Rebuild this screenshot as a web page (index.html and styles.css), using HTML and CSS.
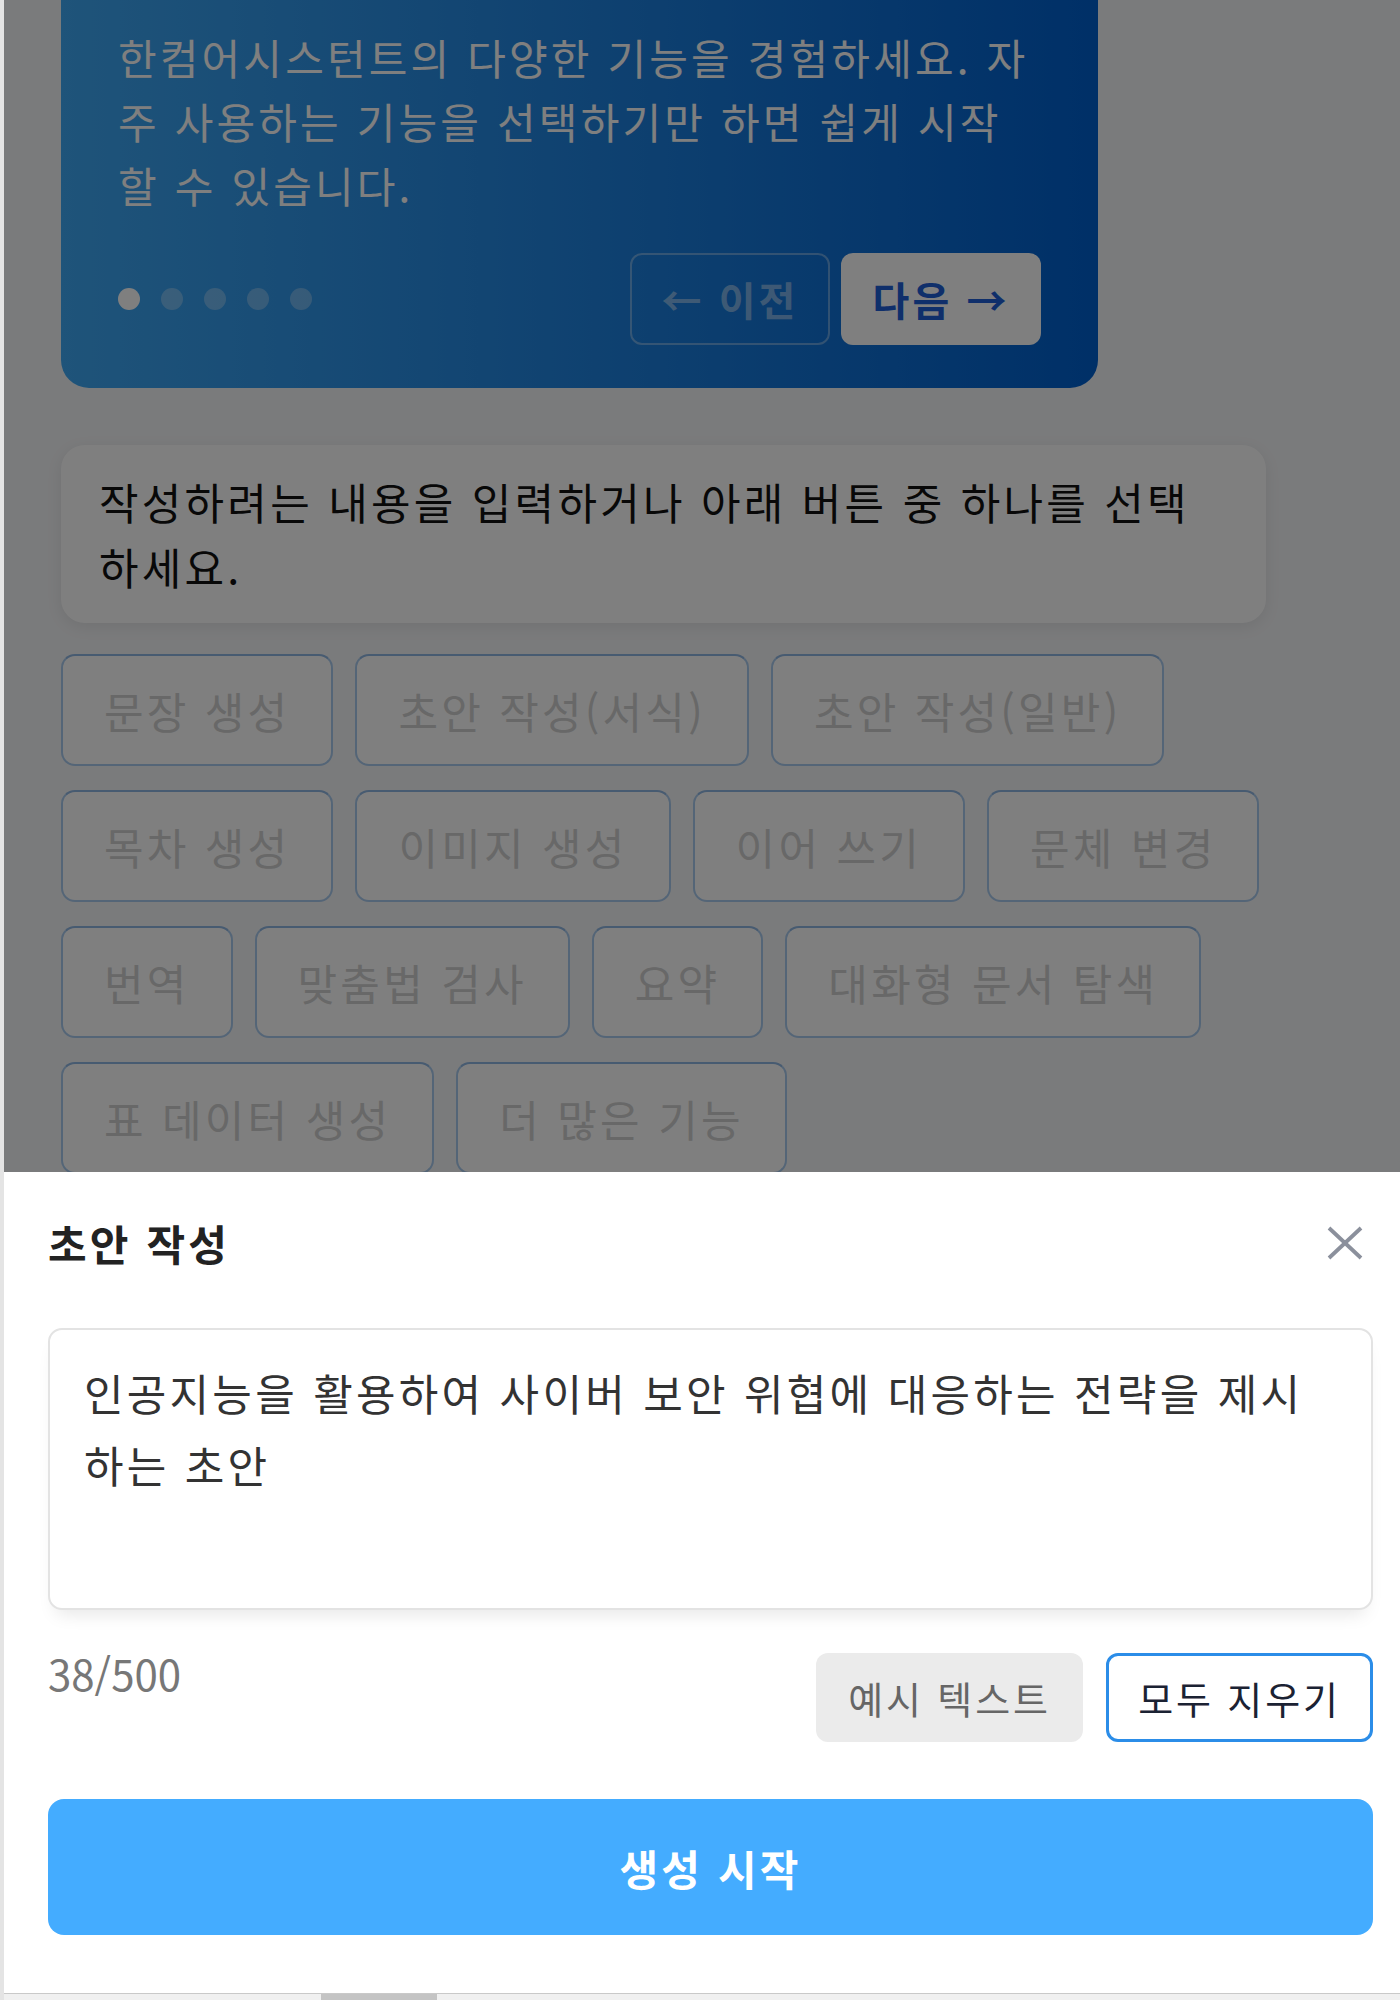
FILE: index.html
```html
<!DOCTYPE html>
<html lang="ko">
<head>
  <meta charset="UTF-8">
  <meta name="viewport" content="width=device-width, initial-scale=1.0">
  <title>한컴어시스턴트 - 초안 작성</title>
  <link rel="stylesheet" href="styles.css">
</head>
<body>
  <div class="app">
    <main class="page">
      <section class="intro-card">
        <p class="intro-text">한컴어시스턴트의 다양한 기능을 경험하세요. 자주 사용하는 기능을 선택하기만 하면 쉽게 시작할 수 있습니다.</p>
        <div class="intro-controls">
          <div class="dots">
            <span class="dot active"></span>
            <span class="dot"></span>
            <span class="dot"></span>
            <span class="dot"></span>
            <span class="dot"></span>
          </div>
          <div class="intro-nav">
            <button class="nav-btn prev">← 이전</button>
            <button class="nav-btn next">다음 →</button>
          </div>
        </div>
      </section>

      <div class="prompt-box">작성하려는 내용을 입력하거나 아래 버튼 중 하나를 선택하세요.</div>

      <div class="chips">
        <button class="chip">문장 생성</button>
        <button class="chip">초안 작성(서식)</button>
        <button class="chip">초안 작성(일반)</button>
        <button class="chip">목차 생성</button>
        <button class="chip">이미지 생성</button>
        <button class="chip">이어 쓰기</button>
        <button class="chip">문체 변경</button>
        <button class="chip">번역</button>
        <button class="chip">맞춤법 검사</button>
        <button class="chip">요약</button>
        <button class="chip">대화형 문서 탐색</button>
        <button class="chip">표 데이터 생성</button>
        <button class="chip">더 많은 기능</button>
      </div>
    </main>

    <div class="backdrop"></div>

    <!-- bottom sheet -->
    <section class="sheet">
      <header class="sheet-header">
        <h2>초안 작성</h2>
        <button class="close-btn" aria-label="닫기">
          <svg width="36" height="34" viewBox="0 0 36 34">
            <path d="M2 2 L34 32 M34 2 L2 32" stroke="#8b909c" stroke-width="3.8" fill="none"/>
          </svg>
        </button>
      </header>

      <textarea class="draft-input">인공지능을 활용하여 사이버 보안 위협에 대응하는 전략을 제시하는 초안</textarea>

      <div class="draft-footer">
        <span class="counter">38/500</span>
        <div class="draft-actions">
          <button class="btn-sample">예시 텍스트</button>
          <button class="btn-clear">모두 지우기</button>
        </div>
      </div>

      <button class="btn-generate">생성 시작</button>
    </section>

    <div class="hscroll"><div class="hscroll-thumb"></div></div>
  </div>
</body>
</html>
```

FILE: styles.css
```css
:root {
  --color-page: #f5f6f8;
  --color-primary: #44acff;
  --color-border: #e3e3e3;
  --font-main: "Noto Sans CJK KR", "Noto Sans", sans-serif;
  --tracking: 0.075em;
}

* {
  box-sizing: border-box;
}

html,
body {
  margin: 0;
}

body {
  background-color: #e4e4e4;
  font-family: var(--font-main);
}

button,
textarea {
  font-family: inherit;
}

.app {
  position: relative;
  margin-left: 4px;
  height: 2000px;
  overflow: hidden;
  background-color: var(--color-page);
}

.page {
  width: 1205px;
  margin-left: 57px;
}

/* intro carousel card */
.intro-card {
  width: 1037px;
  margin-top: -40px;
  padding: 65px 57px 43px;
  border-radius: 28px;
  background: linear-gradient(90deg, #3ea8f4, #0060cf);
  color: #fff;
}

.intro-text {
  margin: 0;
  font-size: 42px;
  line-height: 64px;
  letter-spacing: var(--tracking);
}

.intro-controls {
  display: flex;
  justify-content: space-between;
  align-items: center;
  margin-top: 36px;
}

.dots {
  display: flex;
  gap: 21px;
}

.dot {
  width: 22px;
  height: 22px;
  border-radius: 50%;
  background-color: rgba(255, 255, 255, 0.3);
}

.dot.active {
  background-color: #fff;
}

.intro-nav {
  display: flex;
  gap: 11px;
}

.nav-btn {
  width: 200px;
  height: 92px;
  border-radius: 12px;
  font-size: 40px;
  font-weight: 700;
  letter-spacing: var(--tracking);
  cursor: pointer;
}

.nav-btn.prev {
  background: transparent;
  border: 2px solid rgba(255, 255, 255, 0.35);
  color: rgba(255, 255, 255, 0.45);
}

.nav-btn.next {
  background-color: #fff;
  border: none;
  color: #1f5fd6;
}

/* prompt */
.prompt-box {
  margin-top: 57px;
  padding: 24px 64px 24px 38px;
  background-color: #fff;
  border-radius: 24px;
  box-shadow: 0 4px 16px rgba(0, 0, 0, 0.08);
  font-size: 43px;
  line-height: 65px;
  letter-spacing: var(--tracking);
  color: #111;
}

.chips {
  display: flex;
  flex-wrap: wrap;
  gap: 24px 22px;
  width: 1240px;
  margin-top: 31px;
}

.chip {
  height: 112px;
  padding: 0 41px;
  border: 2px solid #a9cbee;
  border-top-color: #8fb6e2;
  border-radius: 14px;
  background-color: #fff;
  color: #d0d0d0;
  font-size: 43px;
  letter-spacing: var(--tracking);
}

.backdrop {
  position: absolute;
  inset: 0;
  background-color: rgba(0, 0, 0, 0.5);
}

/* bottom sheet */
.sheet {
  position: absolute;
  left: 0;
  right: 0;
  bottom: 7px;
  padding: 39px 27px 58px 44px;
  background-color: #fff;
}

.sheet-header {
  display: flex;
  justify-content: space-between;
  align-items: center;
  height: 64px;
}

.sheet-header h2 {
  margin: 0;
  font-size: 42px;
  font-weight: 700;
  line-height: 64px;
  letter-spacing: var(--tracking);
  color: #222;
}

.close-btn {
  width: 36px;
  height: 34px;
  margin-right: 10px;
  padding: 0;
  border: none;
  background: none;
  cursor: pointer;
}

.close-btn svg {
  display: block;
}

.draft-input {
  display: block;
  width: 100%;
  height: 282px;
  margin-top: 53px;
  padding: 26px 50px 0 34px;
  border: 2px solid var(--color-border);
  border-radius: 14px;
  box-shadow: 0 12px 18px -8px rgba(0, 0, 0, 0.1);
  font-size: 43px;
  line-height: 72px;
  letter-spacing: var(--tracking);
  color: #333;
  resize: none;
  outline: none;
}

.draft-footer {
  display: flex;
  justify-content: space-between;
  align-items: flex-start;
  margin-top: 43px;
}

.counter {
  margin-top: -3px;
  font-size: 42px;
  line-height: 46px;
  color: #777;
}

.draft-actions {
  display: flex;
  gap: 23px;
}

.btn-sample,
.btn-clear {
  width: 267px;
  height: 89px;
  border-radius: 12px;
  font-size: 38px;
  letter-spacing: var(--tracking);
  cursor: pointer;
}

.btn-sample {
  background-color: #ebebeb;
  border: none;
  color: #666;
}

.btn-clear {
  background-color: #fff;
  border: 3px solid #2b8de8;
  color: #1b2233;
}

.btn-generate {
  display: block;
  width: 100%;
  height: 136px;
  margin-top: 57px;
  border: none;
  border-radius: 16px;
  background-color: var(--color-primary);
  color: #fff;
  font-size: 42px;
  font-weight: 700;
  letter-spacing: var(--tracking);
  cursor: pointer;
}

.hscroll {
  position: absolute;
  left: 0;
  right: 0;
  bottom: 0;
  height: 7px;
  border-top: 1px solid #c9c9c9;
  background-color: #f0f0f0;
}

.hscroll-thumb {
  width: 116px;
  height: 100%;
  margin-left: 317px;
  background-color: #c4c4c4;
}
```
